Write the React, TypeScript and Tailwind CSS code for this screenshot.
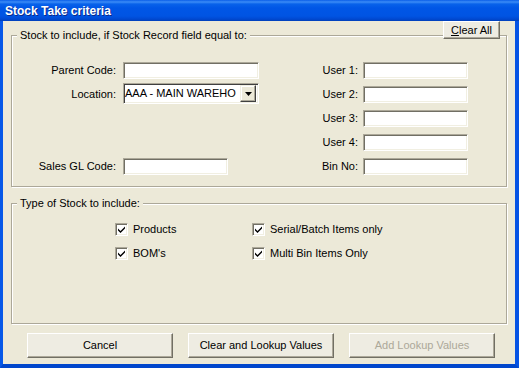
import { ReactNode } from 'react';

function Label({ text, pr }: { text: string; pr: string }) {
  return <div className={`flex items-center justify-end whitespace-nowrap ${pr}`}>{text}</div>;
}

function Edit({ w }: { w: string }) {
  return (
    <div
      className={`h-[17px] bg-white border border-t-[#aca899] border-l-[#aca899] border-b-white border-r-white shadow-[inset_1px_1px_0_#716f64,inset_-1px_-1px_0_#f1efe2] ${w}`}
    />
  );
}

function Group({ title, className, children }: { title: string; className: string; children: ReactNode }) {
  return (
    <div className={`relative border border-[#aca899] shadow-[1px_1px_0_#fff,inset_1px_1px_0_#fff] ${className}`}>
      <span className="absolute -top-[8px] left-[5px] bg-[#ece9d8] px-[3px] leading-[14px] whitespace-nowrap">
        {title}
      </span>
      {children}
    </div>
  );
}

function Check({ label }: { label: string }) {
  return (
    <div className="flex items-center gap-[5px] h-[13px]">
      <span className="flex items-center justify-center w-[13px] h-[13px] bg-white border border-t-[#aca899] border-l-[#aca899] border-b-white border-r-white shadow-[inset_1px_1px_0_#716f64,inset_-1px_-1px_0_#f1efe2]">
        <svg width="7" height="7" viewBox="0 0 7 7">
          <path d="M0 2.5 L2.5 5 L7 0.5 L7 2.5 L2.5 7 L0 4.5 Z" fill="#000" />
        </svg>
      </span>
      <span className="leading-[13px] whitespace-nowrap">{label}</span>
    </div>
  );
}

function Btn({ children, disabled }: { children: ReactNode; disabled?: boolean }) {
  return (
    <button
      className={`w-[146px] h-[25px] bg-[#eeece2] border border-t-white border-l-white border-r-[#716f64] border-b-[#716f64] shadow-[inset_-1px_-1px_0_#aca899] ${
        disabled ? 'text-[#aca899]' : 'text-black'
      }`}
    >
      {children}
    </button>
  );
}

export default function App() {
  return (
    <div className="w-[519px] h-[368px] flex flex-col font-[Liberation_Sans,Arial,sans-serif] text-[11px] text-black">
      <div className="h-[21px] shrink-0 flex items-center pl-[5px] pt-[1px] bg-[linear-gradient(to_bottom,#0a5ee8_0px,#3b8cf7_2px,#0862ea_4px,#0056e6_8px,#0054e3_16px,#0049d2_19px,#003fba_21px)] text-white font-bold text-[12px] [text-shadow:1px_1px_0_#0a2a8a]">
        Stock Take criteria
      </div>

      <div className="relative flex-1 flex flex-col px-[8px] bg-[#ece9d8] border-l-[3px] border-r-[4px] border-b-[4px] border-l-[#0758e8] border-r-[#0553e4] border-b-[#0046cc]">
        <button className="absolute top-0 left-[440px] z-10 w-[57px] h-[18px] bg-[#eeece2] border border-t-white border-l-white border-r-[#716f64] border-b-[#716f64] shadow-[inset_-1px_-1px_0_#aca899] leading-[14px]">
          <span className="underline">C</span>lear All
        </button>

        <Group title="Stock to include, if Stock Record field equal to:" className="mt-[14px] h-[152px] pt-[26px]">
          <div className="grid grid-cols-[111px_136px_104px_105px] grid-rows-[repeat(5,17px)] gap-y-[7px]">
            <Label text="Parent Code:" pr="pr-[7px]" />
            <Edit w="w-[136px]" />
            <Label text="User 1:" pr="pr-[5px]" />
            <Edit w="w-[105px]" />

            <Label text="Location:" pr="pr-[7px]" />
            <div className="-mt-[3px] h-[21px] w-[136px] flex items-center bg-white border border-t-[#aca899] border-l-[#aca899] border-b-white border-r-white shadow-[inset_1px_1px_0_#404040,inset_-1px_-1px_0_#f1efe2]">
              <span className="pl-[1px] whitespace-nowrap overflow-hidden">AAA - MAIN WAREHO</span>
              <span className="ml-auto mr-[2px] w-[16px] h-[17px] flex items-center justify-center bg-[#ece9d8] border border-t-[#f1efe2] border-l-[#f1efe2] border-r-[#404040] border-b-[#404040] shadow-[inset_-1px_-1px_0_#aca899,inset_1px_1px_0_#fff]">
                <svg width="7" height="4" viewBox="0 0 7 4">
                  <path d="M0 0 H7 L3.5 4 Z" fill="#000" />
                </svg>
              </span>
            </div>
            <Label text="User 2:" pr="pr-[5px]" />
            <Edit w="w-[105px]" />

            <div />
            <div />
            <Label text="User 3:" pr="pr-[5px]" />
            <Edit w="w-[105px]" />

            <div />
            <div />
            <Label text="User 4:" pr="pr-[5px]" />
            <Edit w="w-[105px]" />

            <Label text="Sales GL Code:" pr="pr-[7px]" />
            <Edit w="w-[105px]" />
            <Label text="Bin No:" pr="pr-[5px]" />
            <Edit w="w-[105px]" />
          </div>
        </Group>

        <Group title="Type of Stock to include:" className="mt-[16px] h-[121px] pt-[19px] pl-[103px]">
          <div className="grid grid-cols-[137px_auto] gap-y-[11px]">
            <Check label="Products" />
            <Check label="Serial/Batch Items only" />
            <Check label="BOM's" />
            <Check label="Multi Bin Items Only" />
          </div>
        </Group>

        <div className="mt-[9px] flex gap-[15px] pl-[16px]">
          <Btn>Cancel</Btn>
          <Btn>Clear and Lookup Values</Btn>
          <Btn disabled>Add Lookup Values</Btn>
        </div>
      </div>
    </div>
  );
}
